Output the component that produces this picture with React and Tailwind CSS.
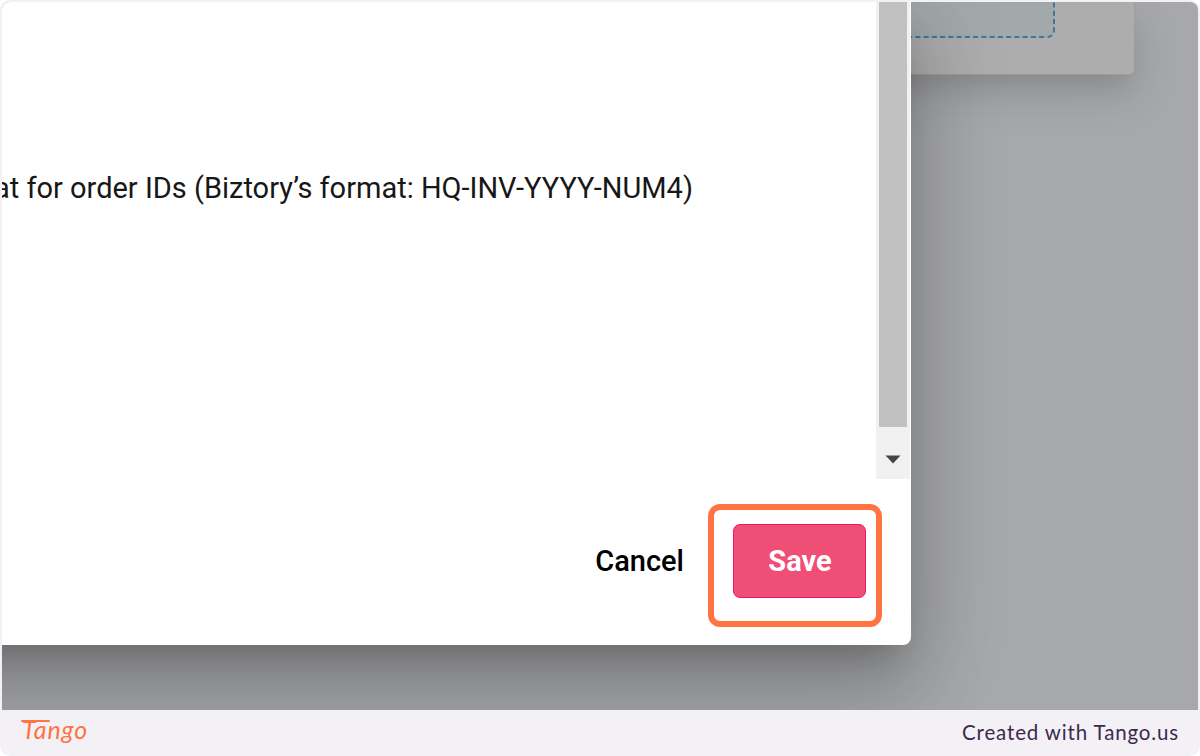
const TangoLogo = () => (
  <div className="relative ml-[17px] h-[36px] w-[72px] text-[#ff7442]">
    <span className="block pl-[3px] font-['Lato'] text-[25px] italic font-normal leading-[29px] tracking-[0.9px]">
      Tango
    </span>
    <span className="absolute left-[2px] top-[5px] h-[2px] w-[29px] rounded-full bg-[#ff7442]" />
  </div>
);

const BackgroundCard = () => (
  <div className="absolute right-[63px] top-0 h-[73px] w-[500px] rounded-br-md border-b border-r border-[#9d9d9e] bg-[#adadad] shadow-[0_16px_24px_-8px_rgba(0,0,0,0.1),0_18px_44px_4px_rgba(0,0,0,0.1)]">
    <div className="absolute -top-4 right-[79px] h-[52px] w-[360px] rounded-[8px] bg-[#a3a8ab]">
      <svg className="absolute inset-0" width="360" height="52" fill="none">
        <path
          d="M359 0V44Q359 51 351 51H0"
          stroke="#40779f"
          strokeWidth="2"
          strokeDasharray="5 3.25"
        />
      </svg>
    </div>
  </div>
);

const Scrollbar = () => (
  <div className="mr-px flex h-[477px] w-[34px] shrink-0 flex-col bg-[#f1f1f1]">
    <div className="ml-[3px] h-[425px] w-[28px] bg-[#c1c1c1]" />
    <div className="flex flex-1 items-center justify-center pt-[12px]">
      <svg width="16" height="9" viewBox="0 0 16 9">
        <path d="M0.5 0.5H15.5L8 8.5Z" fill="#444" />
      </svg>
    </div>
  </div>
);

// the dialog runs past the left edge of the frame, so its shadow does too
const Dialog = () => (
  <div className="relative -ml-[300px] flex h-[643px] w-[1209px] flex-col rounded-br-lg bg-white pl-[300px] font-['Roboto'] text-[#171717] shadow-[0_22px_30px_-14px_rgba(0,0,0,0.2),0_48px_76px_6px_rgba(0,0,0,0.14),0_18px_92px_16px_rgba(0,0,0,0.12)]">
    <div className="flex h-[477px] justify-end">
      <div className="flex flex-1 justify-end overflow-hidden pr-[183px] pt-[166px]">
        <p className="whitespace-nowrap text-[29px] leading-[40px]">
          at for order IDs (Biztory’s format: HQ-INV-YYYY-NUM4)
        </p>
      </div>
      <Scrollbar />
    </div>
    <div className="flex items-start justify-end pr-[29px] pt-[25px]">
      <button className="mr-[24px] mt-[37px] text-[29px] font-medium leading-[40px] text-black">
        Cancel
      </button>
      <div className="h-[123px] w-[174px] rounded-xl border-6 border-[#ff7442] pl-[19px] pt-[14px]">
        <button className="h-[74px] w-[133px] rounded-[7px] border border-[#ec1763] bg-[#ef4e76] pl-px pt-[2px] text-[29px] font-bold text-white">
          Save
        </button>
      </div>
    </div>
  </div>
);

function App() {
  return (
    <div className="flex h-[756px] w-[1200px] flex-col overflow-hidden bg-white">
      <div className="flex h-full flex-col rounded-[10px] bg-[#f3f1f6] px-[2px] pt-[2px]">
        <div className="relative h-[708px] overflow-hidden rounded-t-[8px] bg-[#a7a8aa]">
          <BackgroundCard />
          <Dialog />
        </div>
        <div className="flex flex-1 items-center justify-between">
          <TangoLogo />
          <p className="mr-[19px] pb-[2px] font-['Lato'] text-[20.5px] tracking-[0.85px] text-[#3c2a4d]">
            Created with Tango.us
          </p>
        </div>
      </div>
    </div>
  );
}

export default App;
